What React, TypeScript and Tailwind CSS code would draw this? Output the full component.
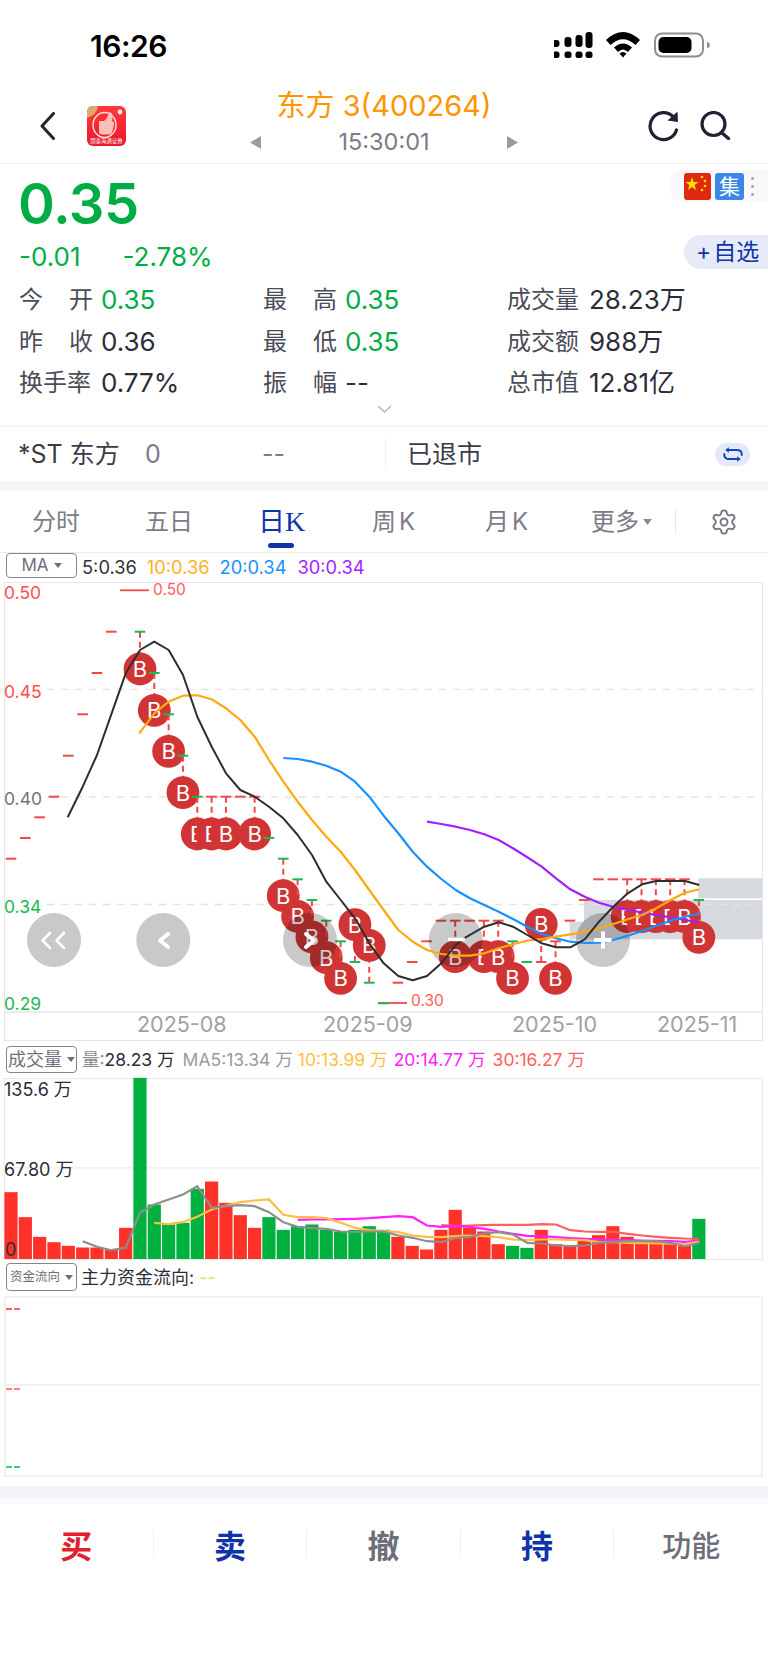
import React from "react";
import { Settings } from "lucide-react";

const X = (i: number) => 11 + 14.33 * i;
const z3 = (a: number[]) => { const r: string[] = []; for (let k = 0; k < a.length; k += 2) r.push(`${(a[k] / 3).toFixed(1)},${(a[k + 1] / 3 + 560).toFixed(1)}`); return r; };
const z4 = (a: number[]) => { const r: string[] = []; for (let k = 0; k < a.length; k += 2) r.push(`${(a[k] / 3 + 384).toFixed(1)},${(a[k + 1] / 3 + 700).toFixed(1)}`); return r; };
const z5 = (a: number[]) => { const r: string[] = []; for (let k = 0; k < a.length; k += 2) r.push(`${(a[k] / 3).toFixed(1)},${(a[k + 1] / 3 + 1030).toFixed(1)}`); return r; };
const z6 = (a: number[]) => { const r: string[] = []; for (let k = 0; k < a.length; k += 2) r.push(`${(a[k] / 3 + 384).toFixed(1)},${(a[k + 1] / 3 + 1030).toFixed(1)}`); return r; };

const ma5 = [...z3([203,772,248,680,291,585,334,463,377,340,420,270,463,245,506,270,549,345,592,470,635,560,678,640,721,690,764,710,807,740,850,775,893,825,936,885,979,965,1022,1020,1065,1075,1108,1150,1151,1210]),
  ...z4([43,828,86,841,129,828,172,790,215,735,245,712,301,680,344,667,387,680,430,705,473,730,516,742,559,742,602,718,645,665,688,620,731,580,774,553,817,543,860,543,903,543,946,555])].join(" ");
const ma10 = [...z3([418,520,463,460,506,425,549,407,592,406,635,418,678,445,721,480,764,530,807,600,850,665,893,725,936,780,979,830,1022,875,1065,930,1108,990,1151,1050]),
  ...z4([43,690,86,725,129,750,172,762,215,767,258,767,301,760,344,745,387,733,430,722,473,717,516,710,559,703,602,695,645,685,688,672,731,658,774,645,817,625,860,600,903,578,946,568])].join(" ");
const ma20 = [...z3([850,594,893,597,936,605,979,617,1022,635,1065,665,1108,710,1151,767]),
  ...z4([43,400,86,455,129,500,172,537,215,570,258,595,301,615,344,635,387,657,430,680,473,702,516,715,559,725,602,729,645,728,688,720,731,707,774,693,817,677,860,662,903,650,946,640])].join(" ");
const ma30 = z4([129,365,172,372,215,380,258,390,301,403,344,420,387,445,430,472,473,500,516,535,559,568,602,590,645,608,688,620,731,630,774,637,817,645,860,652,903,660,946,667]).join(" ");

const redDash: [number, number][] = [[0,858.7],[1,838],[2,817.3],[3,796.7],[4,755.7],[5,714.3],[6,673],[7,631.7],[14,796.7],[15,796.7],[16,796.7],[17,796.7],[27,982.7],[28,962],[29,941.3],[30,920.7],[31,920.7],[32,920.7],[33,920.7],[34,920.7],[37,962],[38,941.3],[39,920.7],[40,900],[41,879.3],[42,879.3],[43,879.3],[44,879.3],[45,879.3],[46,879.3],[47,879.3]];
const greenDash: [number, number][] = [[9,631.7],[10,673],[11,714.3],[12,755.7],[13,796.7],[18,838],[19,858.7],[20,879.3],[21,900],[22,920.7],[23,941.3],[24,962],[25,982.7],[26,1003.3],[35,941.3],[36,962],[48,900]];
const circles: [number, number, number][] = [[9,669,631.7],[10,710.3,673],[11,751.3,714.3],[12,792.7,755.7],[13,834,796.7],[14,834,796.7],[15,834,796.7],[17,834,796.7],[19,895.7,858.7],[20,916.3,879.3],[21,937,900],[22,957.7,920.7],[23,978.3,941.3],[24,924.7,962],[25,945.3,982.7],[31,956.7,920.7],[33,956.7,920.7],[34,956.7,920.7],[35,978.3,941.3],[37,924.3,962],[38,978.3,941.3],[43,916.7,879.3],[44,916.7,879.3],[45,916.7,879.3],[46,916.7,879.3],[47,916.7,879.3],[48,937.3,900]];

const R = "#ff3229";
const G = "#00b140";
const bars: [number, string][] = [[488,R],[563,R],[622,R],[638,R],[649,R],[654,R],[654,R],[660,R],[595,R],[145,G],[525,G],[585,G],[580,G],[478,G],[456,R],[520,R],[557,R],[595,R],[563,G],[601,G],[590,G],[585,G],[601,G],[606,G],[601,G],[590,G],[601,G],[622,R],[649,R],[660,R],[601,R],[541,R],[595,R],[606,R],[644,R],[649,G],[655,G],[601,R],[644,R],[649,R],[633,R],[617,R],[590,R],[622,R],[633,R],[638,R],[644,R],[649,R],[568,G]];

const v5 = [...z5([248,635,291,652,334,662,377,655,420,550,463,525,506,510,549,495,592,470,635,535,678,530,721,527,764,530,807,548,850,578,893,592,936,596,979,598,1022,606,1065,607,1108,606,1151,606]),
  ...z6([43,618,86,625,129,635,172,638,215,625,258,622,301,612,344,608,387,615,430,640,473,642,516,648,559,650,602,648,645,640,688,637,731,635,774,635,817,635,860,640,903,650,946,640])].join(" ");
const v10 = [...z5([463,580,506,584,549,578,592,562,635,540,678,528,721,518,764,513,807,510,850,556,893,563,936,563,979,566,1022,580,1065,595,1108,602,1151,605]),
  ...z6([43,608,86,618,129,622,172,623,215,620,258,618,301,620,344,623,387,630,430,632,473,630,516,630,559,631,602,632,645,638,688,638,731,640,774,641,817,642,860,642,903,644,946,636])].join(" ");
const v20 = [...z5([893,571,936,570,979,570,1022,569,1065,568,1108,566,1151,563]),
  ...z6([43,560,86,563,129,588,172,592,215,590,258,592,301,598,344,606,387,613,430,619,473,620,516,623,559,626,602,628,645,630,688,632,731,632,774,633,817,634,860,635,903,637,946,633])].join(" ");
const v30 = z6([172,587,215,590,258,588,301,587,344,586,387,586,430,586,473,584,516,585,559,602,602,606,645,607,688,607,731,613,774,618,817,622,860,625,903,627,946,628]).join(" ");

function StatusBar() {
  return (
    <div className="flex h-[88px] items-start justify-between pl-[90px] pr-[57px] pt-[28px]">
      <span className="text-[30px] font-semibold leading-[36px] text-black tracking-[-0.5px]">16:26</span>
      <svg width="157" height="28" viewBox="554 31 157 28" className="mt-[3px]">
        {[[556,40,7],[568,37,10],[579,35,12],[589,32,16]].map(([x, y, h], i) => (
          <rect key={i} x={x - 3.5} y={y} width="7" height={h} rx="3" fill="#000" />
        ))}
        {[556,568,579,589].map((x) => <rect key={x} x={x - 3.5} y="51.5" width="7" height="6.5" rx="2.5" fill="#000" />)}
        <path d="M606 40 Q623 24 640 40 L635.5 45 Q623 33.5 610.5 45 Z" fill="#000" />
        <path d="M614 47.5 Q623 39.5 632 47.5 L628 52 Q623 47 618 52 Z" fill="#000" />
        <path d="M619.5 53.5 Q623 50.5 626.5 53.5 L623 57.5 Z" fill="#000" />
        <rect x="655" y="33.5" width="48" height="23" rx="7" fill="none" stroke="#8e8e8e" strokeWidth="2" />
        <rect x="658.5" y="37" width="33" height="16" rx="5" fill="#000" />
        <path d="M707 41.5 Q710 43 710 45 Q710 47 707 48.5 Z" fill="#8e8e8e" />
      </svg>
    </div>
  );
}

function Logo() {
  return (
    <svg width="39" height="40" viewBox="0 0 39 40" className="ml-[32px]">
      <defs>
        <linearGradient id="lg" x1="0" y1="0" x2="0" y2="1">
          <stop offset="0" stopColor="#ff3a3a" />
          <stop offset="1" stopColor="#e9182a" />
        </linearGradient>
      </defs>
      <rect width="39" height="40" rx="6" fill="url(#lg)" />
      <path d="M0 12 V6 Q0 0 6 0 H11 Q10 9 0 12Z" fill="#d9ab6c" />
      <ellipse cx="17.5" cy="19" rx="11.5" ry="12.5" fill="none" stroke="#ffe3e3" strokeWidth="1.4" />
      <path d="M12 15 L17 15 Q21 12 22 6 Q26 6 25.5 12 L25 15 Q28 16 27 19 L25 27 Q24 28.5 21 28.5 L15 28.5 Q12 28.5 12 26 Z" fill="#f9c0b8" />
      <circle cx="33" cy="6" r="2.4" fill="#fff" />
      <text x="19.5" y="37" textAnchor="middle" fontSize="5.4" fill="#fff">国泰海通证券</text>
    </svg>
  );
}

function Header() {
  return (
    <div className="grid h-[76px] grid-cols-[1fr_300px_1fr] items-center border-b border-[#f1f1f4]">
      <div className="flex items-center pl-[40px]">
        <svg width="15" height="28" viewBox="0 0 15 28" fill="none">
          <path d="M13.5 1.5 L2 14 L13.5 26.5" stroke="#1e2233" strokeWidth="3" strokeLinecap="round" strokeLinejoin="round" />
        </svg>
        <Logo />
      </div>
      <div className="mb-[7px] flex flex-col items-center">
        <span className="text-[29px] leading-[36px] text-[#ff9500]">东方 3(400264)</span>
        <div className="mt-[4px] flex w-[268px] items-center justify-between">
          <svg width="11" height="13" viewBox="0 0 11 13"><path d="M11 0 V13 L0 6.5Z" fill="#9a9aa6" /></svg>
          <span className="text-[23.5px] leading-[28px] text-[#7c7c88]">15:30:01</span>
          <svg width="11" height="13" viewBox="0 0 11 13"><path d="M0 0 V13 L11 6.5Z" fill="#9a9aa6" /></svg>
        </div>
      </div>
      <div className="flex items-center justify-end gap-[19px] pr-[37px]">
        <svg width="33" height="32" viewBox="0 0 33 32" fill="none">
          <path d="M28.5 20 A13.5 13.5 0 1 1 25.5 7" stroke="#1e2233" strokeWidth="3.2" strokeLinecap="round" />
          <path d="M29.5 1.5 L30 12 L19.5 10.5 Z" fill="#1e2233" />
        </svg>
        <svg width="31" height="29" viewBox="0 0 31 29" fill="none">
          <circle cx="13.5" cy="13" r="11.5" stroke="#1e2233" strokeWidth="3.2" />
          <path d="M22 22 L28.5 27.5" stroke="#1e2233" strokeWidth="3.4" strokeLinecap="round" />
        </svg>
      </div>
    </div>
  );
}

function Stat({ a, v, c }: { a: string[]; v: string; c: string }) {
  return (
    <div className="flex items-center">
      <div className="flex w-[74px] justify-between text-[#4a4c58]">
        {a.map((t) => <span key={t}>{t}</span>)}
      </div>
      <span className={`ml-[8px] text-[26px] ${c}`}>{v}</span>
    </div>
  );
}

const GR = "text-[#00ad45]";
const DK = "text-[#2b2d3a]";

function Quote() {
  return (
    <div className="relative h-[261px]">
      <div className="flex items-start justify-between">
        <span className="mb-[3px] ml-[18px] mt-[6px] text-[56px] font-semibold leading-[68px] text-[#00ad45] tracking-[-0.5px]">0.35</span>
        <div className="mt-[6px] flex h-[32px] w-[98px] items-center rounded-l-[12px] bg-[#f8f8fa] pl-[14px]">
          <svg width="27" height="27" viewBox="0 0 27 27">
            <rect width="27" height="27" rx="3" fill="#de2910" />
            <path d="M8 4 L9.6 9 L14.6 9 L10.6 12 L12.1 17 L8 14 L3.9 17 L5.4 12 L1.4 9 L6.4 9Z" fill="#ffde00" />
            <circle cx="18" cy="4" r="1.3" fill="#ffde00" /><circle cx="21" cy="8" r="1.3" fill="#ffde00" /><circle cx="21" cy="13" r="1.3" fill="#ffde00" /><circle cx="18" cy="17" r="1.3" fill="#ffde00" />
          </svg>
          <span className="ml-[4px] flex h-[27px] w-[29px] items-center justify-center rounded-[3px] bg-[#3a87e8] text-[21px] leading-none text-white">集</span>
          <div className="ml-[7px] flex flex-col gap-[5px]">
            <i className="block h-[3px] w-[3px] rounded-full bg-[#a0a0a8]" /><i className="block h-[3px] w-[3px] rounded-full bg-[#a0a0a8]" /><i className="block h-[3px] w-[3px] rounded-full bg-[#a0a0a8]" />
          </div>
        </div>
      </div>
      <div className="flex items-start justify-between">
        <div className="ml-[19px] mt-[1px] flex gap-[42px] text-[26px] leading-[30px] text-[#00ad45]">
          <span>-0.01</span><span>-2.78%</span>
        </div>
        <div className="mt-[-6px] flex h-[34px] w-[84px] items-center rounded-l-full bg-[#e6ebf7] pl-[12px] text-[23px] leading-none text-[#0f33a8]">
          <span className="mr-[2px]">+</span><span>自选</span>
        </div>
      </div>
      <div className="ml-[19px] mt-[7px] grid grid-cols-[244px_244px_1fr] text-[24px] leading-[41.7px]">
        <Stat a={["今","开"]} v="0.35" c={GR} />
        <Stat a={["最","高"]} v="0.35" c={GR} />
        <Stat a={["成交量"]} v="28.23万" c={DK} />
        <Stat a={["昨","收"]} v="0.36" c={DK} />
        <Stat a={["最","低"]} v="0.35" c={GR} />
        <Stat a={["成交额"]} v="988万" c={DK} />
        <Stat a={["换手率"]} v="0.77%" c={DK} />
        <Stat a={["振","幅"]} v="--" c={DK} />
        <Stat a={["总市值"]} v="12.81亿" c={DK} />
      </div>
      <div className="flex justify-center">
        <svg width="15" height="8" viewBox="0 0 15 8" fill="none" className="mt-[1px]"><path d="M1 1 L7.5 7 L14 1" stroke="#b8b8c0" strokeWidth="1.5" /></svg>
      </div>
    </div>
  );
}

function StRow() {
  return (
    <div className="flex h-[56px] items-center border-t-2 border-[#f3f4f7] text-[25px] leading-none">
      <span className="ml-[18px] w-[127px] text-[#3a3c48]">*ST 东方</span>
      <span className="w-[117px] text-[#7c7c88]">0</span>
      <span className="w-[123px] text-[#7c7c88]">--</span>
      <div className="flex h-[32px] flex-1 items-center border-l border-[#eeeef1] pl-[21px] text-[#3a3c48]">已退市</div>
      <div className="mr-[18px] flex h-[23px] w-[35px] items-center justify-center rounded-full bg-[#e4e9f7]">
        <svg width="22" height="17" viewBox="0 0 24 17" fill="none">
          <path d="M6 3.5 H16 Q21.5 3.5 21.5 8 V9" stroke="#0f45c0" strokeWidth="2.2" strokeLinecap="round" />
          <path d="M18 13.5 H8 Q2.5 13.5 2.5 9 V8" stroke="#0f45c0" strokeWidth="2.2" strokeLinecap="round" />
          <path d="M7.5 0.5 L3.5 3.5 L7.5 6.5 Z" fill="#0f45c0" />
          <path d="M16.5 10.5 L20.5 13.5 L16.5 16.5 Z" fill="#0f45c0" />
        </svg>
      </div>
    </div>
  );
}

function Tabs() {
  const t = (s: string, w: string) => (
    <div className={`${w} text-[24px] leading-none text-[#7c7c88]`}>{s}</div>
  );
  return (
    <div className="relative flex h-[62px] items-center border-b border-[#ececef]">
      {t("分时", "ml-[32px] w-[113px]")}
      {t("五日", "w-[113px]")}
      <div className="w-[114px] text-[27px] leading-none text-[#0f33a8]">日<span className="font-['Liberation_Serif',serif] text-[28px]">K</span></div>
      <div className="w-[113px] text-[24px] leading-none text-[#7c7c88]">周<span className="ml-[3px]">K</span></div>
      <div className="w-[106px] text-[24px] leading-none text-[#7c7c88]">月<span className="ml-[3px]">K</span></div>
      <div className="flex w-[84px] items-center text-[24px] leading-none text-[#7c7c88]">更多<svg width="9" height="6" viewBox="0 0 9 6" className="ml-[4px]"><path d="M0 0 H9 L4.5 6Z" fill="#8c8c96" /></svg></div>
      <div className="h-[24px] border-l border-[#e8e8ec]" />
      <Settings size={28} strokeWidth={1.6} color="#75757f" className="ml-[34px]" />
      <div className="absolute left-[268px] top-[52px] h-[5px] w-[26px] rounded-full bg-[#0f33a8]" />
    </div>
  );
}

function Selector({ children, w = "w-[71px]" }: { children: React.ReactNode; w?: string }) {
  return (
    <div className={`${w} flex items-center justify-center gap-[5px] rounded-[4px] border border-[#85858f] text-[#6f6f7a]`}>
      {children}
      <svg width="8" height="5" viewBox="0 0 8 5"><path d="M0 0 H8 L4 5Z" fill="#6f6f7a" /></svg>
    </div>
  );
}

function PriceChart() {
  const label = (x: number, y: number, s: string, c: string, fs = 17.5) => (
    <text x={x} y={y} fontSize={fs} fill={c}>{s}</text>
  );
  return (
    <div className="ml-[4px] h-[459px] w-[759px] border border-[#e6e6e8]">
      <svg width="757" height="457" viewBox="5 583 757 457" className="block overflow-visible">
        <rect x="698.3" y="878.3" width="64" height="20" fill="#d6d9dd" />
        <rect x="584" y="900" width="178" height="39.3" fill="#d6d9dd" />
        <rect x="569.7" y="921.7" width="15" height="17.6" fill="#d6d9dd" />
        {[689.3, 797, 904.5].map((y) => (
          <line key={y} x1="47" x2="762" y1={y} y2={y} stroke="#e3e3e6" strokeWidth="1.3" strokeDasharray="7 7" />
        ))}
        <line x1="5" x2="762" y1="1012" y2="1012" stroke="#e6e6e8" strokeWidth="1.3" />
        {label(4, 599, "0.50", "#ff4d4f")}
        {label(4, 698, "0.45", "#ff4d4f")}
        {label(4, 805, "0.40", "#6f7380")}
        {label(4, 913, "0.34", "#1db954")}
        {label(4, 1010, "0.29", "#1db954")}
        {label(153, 595, "0.50", "#ff5a5a", 15.5)}
        {label(411, 1006, "0.30", "#ff5a5a", 15.5)}
        <line x1="120" x2="149" y1="590.3" y2="590.3" stroke="#f24848" strokeWidth="1.8" />
        <line x1="378" x2="407" y1="1003" y2="1003" stroke="#f24848" strokeWidth="1.8" />
        {circles.map(([i, cy, s]) => (
          <g key={i}>
            <line x1={X(i)} x2={X(i)} y1={s} y2={cy} stroke="#f24848" strokeWidth="2" strokeDasharray="6 4" />
            <circle cx={X(i)} cy={cy} r="16.4" fill="#d13434" />
            <text x={X(i)} y={cy + 8} fontSize="22" textAnchor="middle" fill="#fff">B</text>
          </g>
        ))}
        {redDash.map(([i, y]) => <line key={i} x1={X(i) - 5.3} x2={X(i) + 5.3} y1={y} y2={y} stroke="#f24848" strokeWidth="2" />)}
        {greenDash.map(([i, y]) => <line key={i} x1={X(i) - 5.3} x2={X(i) + 5.3} y1={y} y2={y} stroke="#1db954" strokeWidth="2" />)}
        {[54, 163.3, 310, 455.7, 603].map((x) => <circle key={x} cx={x} cy="940" r="27" fill="#000" fillOpacity="0.21" />)}
        <polyline points={ma30} fill="none" stroke="#a31fff" strokeWidth="2.2" strokeLinejoin="round" />
        <polyline points={ma20} fill="none" stroke="#1890ff" strokeWidth="2.2" strokeLinejoin="round" />
        <polyline points={ma10} fill="none" stroke="#ffa90f" strokeWidth="2.2" strokeLinejoin="round" />
        <polyline points={ma5} fill="none" stroke="#2e2e2e" strokeWidth="2" strokeLinejoin="round" />
        <g fill="none" stroke="#fff" strokeLinecap="round" strokeLinejoin="round">
          <path d="M50 933 L42.5 940.5 L50 948 M64 933 L56.5 940.5 L64 948" strokeWidth="2.6" />
          <path d="M168 934 L160 940.5 L168 947" strokeWidth="4" />
          <path d="M306 934 L314 940.5 L306 947" strokeWidth="4" />
          <path d="M448 939.5 H465" strokeWidth="3.4" strokeLinecap="butt" />
          <path d="M594 940 H611.5 M603 931.5 V948.5" strokeWidth="4" strokeLinecap="butt" />
        </g>
        {label(137, 1032, "2025-08", "#a0a0a8", 21.5)}
        {label(323, 1032, "2025-09", "#a0a0a8", 21.5)}
        {label(512, 1032, "2025-10", "#a0a0a8", 21.5)}
        {label(657, 1032, "2025-11", "#a0a0a8", 21.5)}
      </svg>
    </div>
  );
}

function VolumeChart() {
  return (
    <div className="ml-[4px] mt-[0px] h-[182px] w-[759px] border border-[#e8e8ea]">
      <svg width="757" height="180" viewBox="5 1079.5 757 180" className="block overflow-visible">
        <line x1="5" x2="762" y1="1168.3" y2="1168.3" stroke="#ebebed" strokeWidth="1.2" />
        {bars.map(([top, c], i) => {
          const y = top / 3 + 1030;
          return <rect key={i} x={X(i) - 6.6} y={y} width="13.2" height={1259.5 - y} fill={c} />;
        })}
        <polyline points={v30} fill="none" stroke="#ff5f5f" strokeWidth="2.2" />
        <polyline points={v20} fill="none" stroke="#ff1fff" strokeWidth="2.2" />
        <polyline points={v10} fill="none" stroke="#ffbe3d" strokeWidth="2.2" />
        <polyline points={v5} fill="none" stroke="#8e8e8e" strokeWidth="2.2" />
        <text x="4" y="1096" fontSize="18" fill="#2b2d3a">135.6 万</text>
        <text x="4" y="1176" fontSize="18" fill="#2b2d3a">67.80 万</text>
        <text x="5" y="1256" fontSize="18" fill="#2b2d3a">0</text>
      </svg>
    </div>
  );
}

function FlowChart() {
  const d = (c: string, top: string) => (
    <div className={`${top} flex gap-[2px]`}>
      <i className={`block h-[2px] w-[6px] ${c}`} /><i className={`block h-[2px] w-[6px] ${c}`} />
    </div>
  );
  return (
    <div className="ml-[4px] h-[181px] w-[759px] border-2 border-[#f1f1f3]">
      <div className="h-[88px] border-b-2 border-[#f1f1f3]">{d("bg-[#ff6060]", "ml-[0px] pt-[10px]")}</div>
      <div>
        {d("bg-[#ff8080]", "pt-[2px]")}
        {d("bg-[#3fcf6e]", "pt-[76px]")}
      </div>
    </div>
  );
}

export default function App() {
  return (
    <div className="h-[1662px] w-[768px] overflow-hidden bg-white font-[Inter,'Noto_Sans_CJK_SC',sans-serif]">
      <StatusBar />
      <Header />
      <Quote />
      <StRow />
      <div className="h-[10px] bg-[#f4f5f9]" />
      <Tabs />
      <div className="flex h-[29px] items-start pl-[6px] text-[18.3px] leading-[28px]">
        <Selector><span className="text-[17px] leading-[23px]">MA</span></Selector>
        <span className="ml-[5px] text-[#333]">5:0.36</span>
        <span className="ml-[10px] text-[#ffb01f]">10:0.36</span>
        <span className="ml-[10px] text-[#1890ff]">20:0.34</span>
        <span className="ml-[11px] text-[#a31fff]">30:0.34</span>
      </div>
      <PriceChart />
      <div className="flex h-[37px] items-start pl-[6px] pt-[5px] text-[17.5px] leading-[28px]">
        <Selector><span className="text-[18px] leading-[25px]">成交量</span></Selector>
        <span className="ml-[5px] text-[#8a8a94]">量:<span className="text-[#2b2d3a]">28.23 万</span></span>
        <span className="ml-[8px] text-[#9a9aa0]">MA5:13.34 万</span>
        <span className="ml-[5px] text-[#ffc040]">10:13.99 万</span>
        <span className="ml-[6px] text-[#ff22ff]">20:14.77 万</span>
        <span className="ml-[7px] text-[#ff6060]">30:16.27 万</span>
      </div>
      <VolumeChart />
      <div className="flex h-[36px] items-start pl-[6px] pt-[3px]">
        <Selector><span className="text-[12.5px] leading-[26px]">资金流向</span></Selector>
        <span className="ml-[4px] text-[18px] leading-[30px] text-[#2b2d3a]">主力资金流向:</span>
        <span className="ml-[5px] text-[18px] leading-[30px] text-[#e8e040]">--</span>
      </div>
      <FlowChart />
      <div className="mt-[9px] h-[12px] bg-[#f4f5f9]" />
      <div className="h-[6px] bg-[#fbfbfc]" />
      <div className="mt-[25px] grid grid-cols-5 text-[32px] font-bold leading-none">
        <div className="flex h-[29px] items-center justify-center border-r border-[#f0f0f4] pt-[6px] text-[#e2202c]">买</div>
        <div className="flex h-[29px] items-center justify-center border-r border-[#f0f0f4] pt-[6px] text-[#0f33a8]">卖</div>
        <div className="flex h-[29px] items-center justify-center border-r border-[#f0f0f4] pt-[6px] text-[#6e6e7a]">撤</div>
        <div className="flex h-[29px] items-center justify-center border-r border-[#f0f0f4] pt-[6px] text-[#0f33a8]">持</div>
        <div className="flex h-[29px] items-center justify-center pt-[6px] text-[29px] font-medium text-[#6e6e7a]">功能</div>
      </div>
    </div>
  );
}
